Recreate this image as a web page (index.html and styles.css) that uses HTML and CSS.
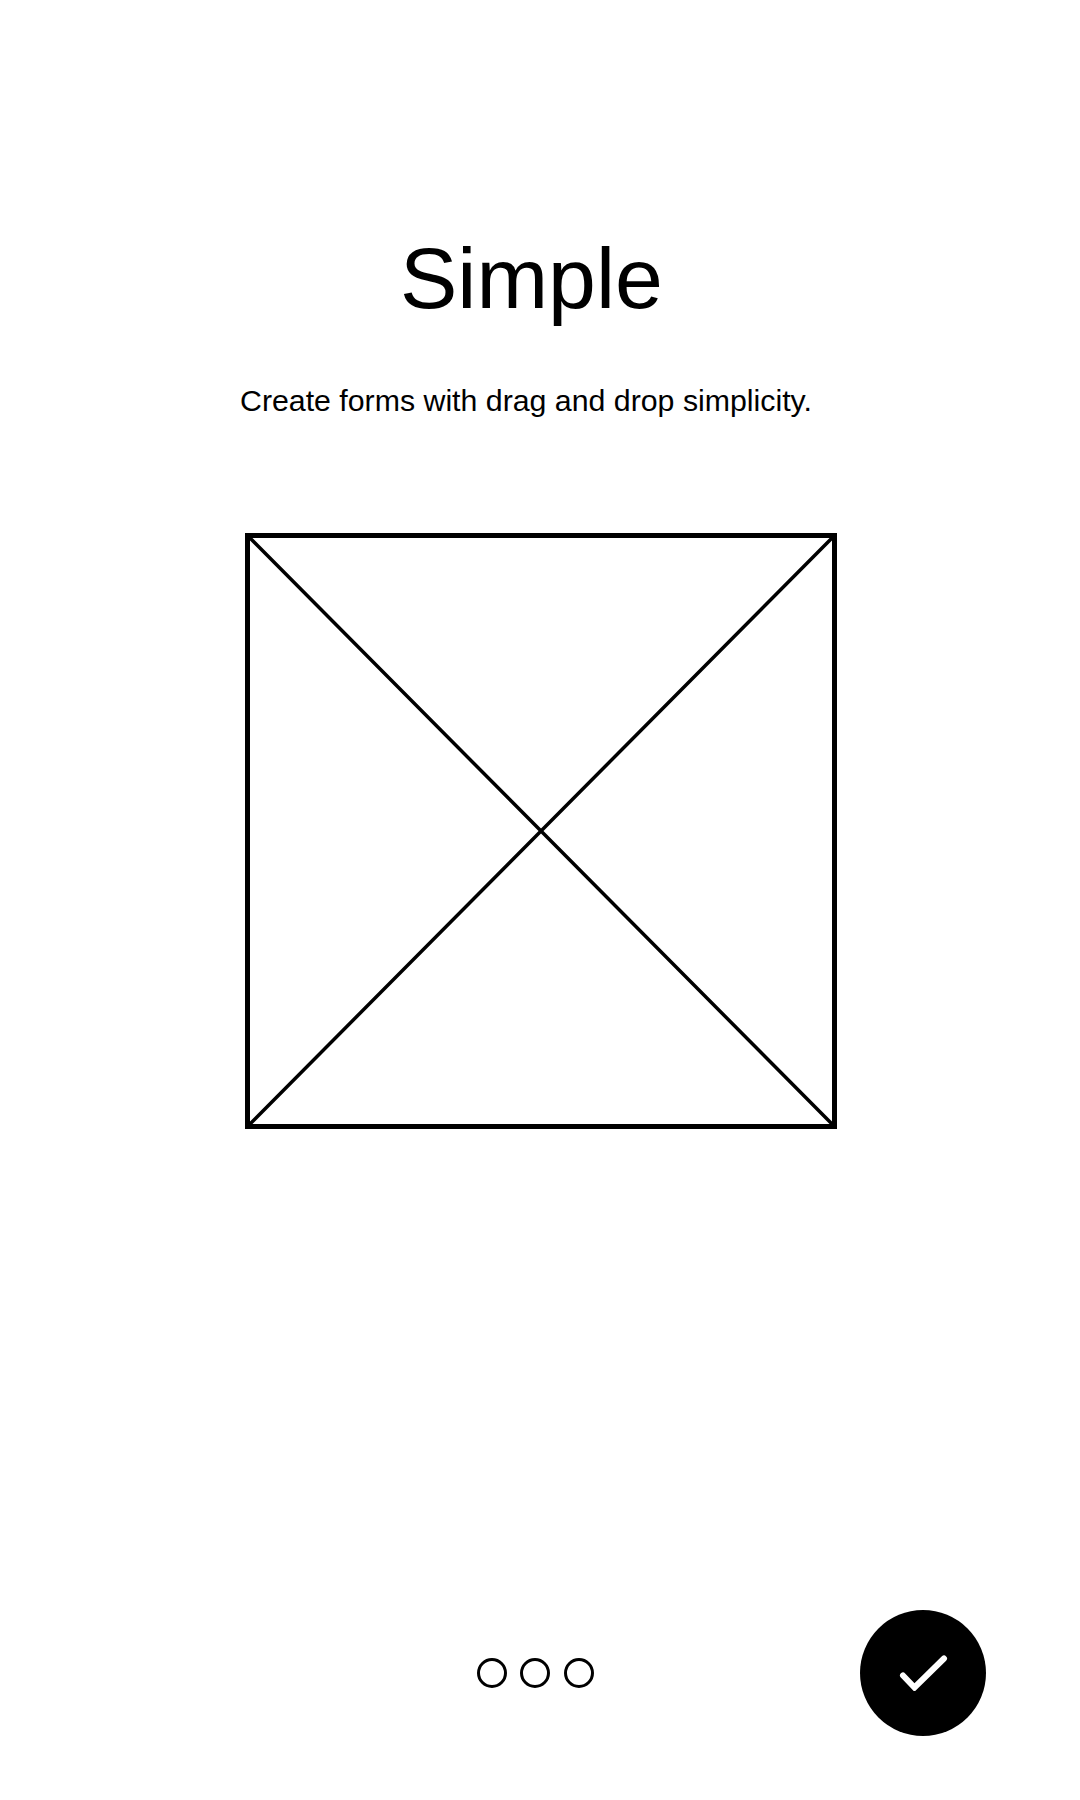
FILE: index.html
```html
<!DOCTYPE html>
<html lang="en">
<head>
    <meta charset="UTF-8">
    <meta name="viewport" content="width=device-width, initial-scale=1.0">
    <title>Simple</title>
    <link rel="stylesheet" href="styles.css">
</head>
<body>
    <div class="page">
        <h1 class="title">Simple</h1>
        <p class="subtitle">Create forms with drag and drop simplicity.</p>

        <svg class="placeholder" width="592" height="596" viewBox="0 0 592 596">
            <rect x="2.5" y="2.5" width="587" height="591" fill="none" stroke="#000" stroke-width="5"/>
            <path d="M3 3L589 593M589 3L3 593" fill="none" stroke="#000" stroke-width="3.5"/>
        </svg>

        <div class="footer">
            <div class="dots">
                <span class="dot"></span>
                <span class="dot"></span>
                <span class="dot"></span>
            </div>
            <button class="done">
                <svg width="50" height="36" viewBox="0 0 50 36">
                    <path d="M5 20.5L16.5 32.5L46 3.5" fill="none" stroke="#fff" stroke-width="6" stroke-linecap="round" stroke-linejoin="miter"/>
                </svg>
            </button>
        </div>
    </div>
</body>
</html>
```

FILE: styles.css
```css
body { margin: 0; background: #fff; color: #000; font-family: "Liberation Sans", Arial, sans-serif; }
.page { width: 1080px; height: 1800px; display: flex; flex-direction: column; box-sizing: border-box; padding-top: 229px; }
.title { margin: 0 0 0 400px; font-size: 86px; font-weight: 400; line-height: 99px; }
.subtitle { margin: 55px 0 0 240px; font-size: 30.3px; line-height: 36px; }
.placeholder { display: block; margin: 114px 0 0 245px; }
.footer { margin-top: auto; margin-bottom: 64px; height: 126px; display: flex; align-items: center; }
.dots { display: flex; gap: 13px; margin-left: 477px; }
.dot { width: 30px; height: 30px; box-sizing: border-box; border: 3px solid #000; border-radius: 50%; }
.dot:last-child { margin-left: 1px; }
.done { width: 126px; height: 126px; margin-left: 266px; padding: 0; border: 0; border-radius: 50%; background: #000; display: flex; align-items: center; justify-content: center; cursor: pointer; }
```
